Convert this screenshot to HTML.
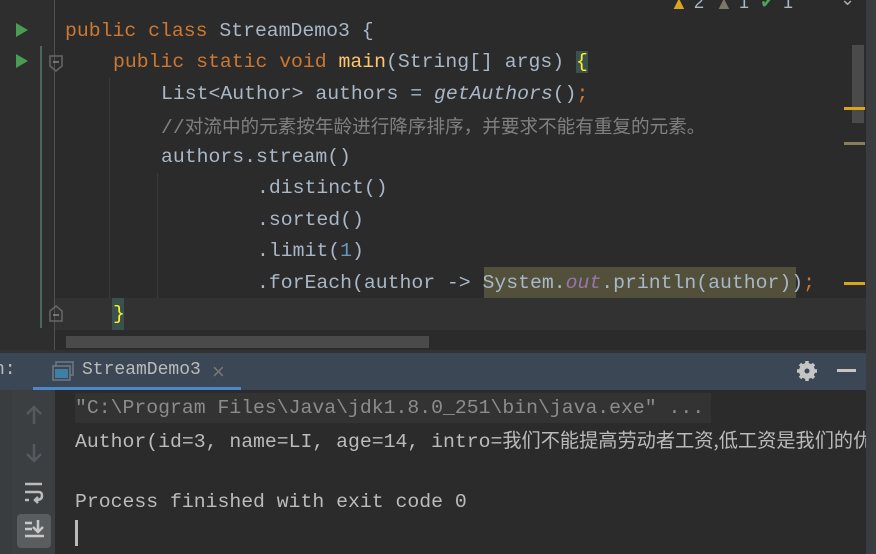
<!DOCTYPE html><html><head><meta charset="utf-8"><style>
*{margin:0;padding:0;box-sizing:border-box}
body{width:876px;height:554px;overflow:hidden;background:#2b2b2b;position:relative;font-family:"Liberation Mono","Noto Sans CJK SC",monospace;font-size:19.8px}
.a{position:absolute;white-space:pre;line-height:31px}
.k{color:#cc7832}.t{color:#a9b7c6}.f{color:#ffc66d}.i{font-style:italic}.c{color:#808080}.p{color:#9876aa;font-style:italic}
.cj{font-family:"Noto Sans CJK SC",sans-serif;font-size:18.6px}
</style></head><body>
<div style="position:absolute;left:0;top:0;width:55px;height:350px;background:#2e2e2e"></div>
<div style="position:absolute;left:54px;top:0;width:1px;height:350px;background:#505050"></div>
<div style="position:absolute;left:40px;top:46px;width:2px;height:282px;background:#4a6b5c"></div>
<div style="position:absolute;left:109px;top:78px;width:1px;height:220px;background:#3b3b3b"></div>
<div style="position:absolute;left:157px;top:173px;width:1px;height:125px;background:#3b3b3b"></div>
<div style="position:absolute;left:55px;top:298px;width:811px;height:32px;background:#323232"></div>
<div style="position:absolute;left:112px;top:298px;width:12px;height:32px;background:#3b514d"></div>
<div style="position:absolute;left:484px;top:267px;width:312px;height:31px;background:#52503a"></div>
<svg style="position:absolute;left:15px;top:22px" width="14" height="16"><path d="M1 1L13 8L1 15Z" fill="#499c54"/></svg>
<svg style="position:absolute;left:15px;top:53px" width="14" height="16"><path d="M1 1L13 8L1 15Z" fill="#499c54"/></svg>
<svg style="position:absolute;left:49px;top:55px" width="14" height="18"><path d="M1 1H13V11L7 16L1 11Z" fill="none" stroke="#666" stroke-width="1.5"/><path d="M4 7H10" stroke="#888" stroke-width="1.5"/></svg>
<svg style="position:absolute;left:49px;top:304px" width="14" height="18"><path d="M1 17H13V7L7 2L1 7Z" fill="none" stroke="#666" stroke-width="1.5"/><path d="M4 11H10" stroke="#888" stroke-width="1.5"/></svg>
<div class="a" style="left:65px;top:16px"><span class="k">public class </span><span class="t">StreamDemo3 {</span></div>
<div class="a" style="left:113px;top:47px"><span class="k">public static void </span><span class="f">main</span><span class="t">(String[] args) </span><span style="color:#ffef28;background:#3b514d">{</span></div>
<div class="a" style="left:161px;top:79px"><span class="t">List&lt;Author&gt; authors = </span><span class="t i">getAuthors</span><span class="t">()</span><span class="k">;</span></div>
<div class="a c" style="left:161px;top:110px">//<span class="cj">对流中的元素按年龄进行降序排序，并要求不能有重复的元素。</span></div>
<div class="a t" style="left:161px;top:142px">authors.stream()</div>
<div class="a t" style="left:257px;top:173px">.distinct()</div>
<div class="a t" style="left:257px;top:205px">.sorted()</div>
<div class="a t" style="left:257px;top:236px">.limit(<span style="color:#6897bb">1</span>)</div>
<div class="a t" style="left:257px;top:268px">.forEach(author -&gt; System.<span class="p">out</span>.println(author))<span class="k">;</span></div>
<div class="a" style="left:113px;top:299px;color:#ffef28">}</div>
<div style="position:absolute;left:670px;top:0;font-family:'Liberation Sans',sans-serif;font-size:18px;color:#a9b7c6;line-height:10px">
<span style="position:absolute;left:0;top:-2px;color:#d9a420">▲</span><span style="position:absolute;left:24px;top:-3px">2</span>
<span style="position:absolute;left:45px;top:-2px;color:#7d7766">▲</span><span style="position:absolute;left:69px;top:-3px">1</span>
<span style="position:absolute;left:90px;top:-3px;color:#4ca35a">✔</span><span style="position:absolute;left:113px;top:-3px">1</span>
<span style="position:absolute;left:140px;top:-3px;color:#aaa">⌃</span><span style="position:absolute;left:170px;top:-6px;color:#aaa">⌄</span></div>
<div style="position:absolute;left:852px;top:45px;width:12px;height:78px;background:#4a4a4a"></div>
<div style="position:absolute;left:844px;top:107px;width:21px;height:3px;background:#d9a420"></div>
<div style="position:absolute;left:844px;top:142px;width:21px;height:3px;background:#8a7d5c"></div>
<div style="position:absolute;left:844px;top:282px;width:21px;height:3px;background:#d9a420"></div>
<div style="position:absolute;left:66px;top:336px;width:363px;height:12px;background:#4a4a4a"></div>
<div style="position:absolute;left:0;top:350px;width:866px;height:3px;background:#323232"></div>
<div style="position:absolute;left:0;top:353px;width:866px;height:37px;background:#3b4754"></div>
<div class="a" style="left:-6px;top:355px;color:#bbb;font-size:18px">n:</div>
<svg style="position:absolute;left:52px;top:361px" width="22" height="20"><rect x="4" y="1" width="17" height="13" fill="none" stroke="#6e7a86" stroke-width="1.5"/><rect x="1" y="5" width="17" height="14" fill="#3b4754" stroke="#6e7a86" stroke-width="1.5"/><rect x="3" y="8" width="13" height="9" fill="#3e7fa6"/></svg>
<div class="a" style="left:82px;top:355px;color:#bbbbbb;font-size:18px">StreamDemo3</div>
<div class="a" style="left:212px;top:356px;color:#777;font-family:'Liberation Sans';font-size:22px">×</div>
<div style="position:absolute;left:33px;top:387px;width:208px;height:3px;background:#4a88c7"></div>
<svg style="position:absolute;left:796px;top:360px" width="22" height="22"><circle cx="11" cy="11" r="6" fill="none" stroke="#c5c5c5" stroke-width="4"/><path d="M11 1V21M1 11H21M4 4L18 18M18 4L4 18" stroke="#c5c5c5" stroke-width="3.5"/><circle cx="11" cy="11" r="2.5" fill="#3b4754"/></svg>
<div style="position:absolute;left:837px;top:369px;width:19px;height:3px;background:#c5c5c5"></div>
<div style="position:absolute;left:0;top:390px;width:12px;height:164px;background:#3a3d3f"></div>
<div style="position:absolute;left:12px;top:390px;width:43px;height:164px;background:#3c3f41"></div>
<svg style="position:absolute;left:24px;top:404px" width="20" height="110" stroke="#555a5e" stroke-width="2.5" fill="none"><path d="M10 20V3M3 10L10 3L17 10"/><path d="M10 40V57M3 50L10 57L17 50"/><g stroke="#bbb" stroke-width="2.5"><path d="M1 80H18M1 88H15Q18 88 18 92Q18 96 12 96M14 93L11 96L14 99M1 96H5"/></g></svg>
<div style="position:absolute;left:17px;top:514px;width:34px;height:34px;background:#5a5d5f;border-radius:4px"></div>
<svg style="position:absolute;left:24px;top:518px" width="22" height="24" stroke="#c8c8c8" stroke-width="2.5" fill="none"><path d="M1 5H8M1 11H8M1 18H20M14 2V14M9 9L14 14L19 9"/></svg>
<div style="position:absolute;left:75px;top:393px;width:636px;height:30px;background:#333"></div>
<div class="a" style="left:75px;top:393px;color:#8c8c8c">"C:\Program Files\Java\jdk1.8.0_251\bin\java.exe" ...</div>
<div class="a" style="left:75px;top:424px;color:#bbbbbb">Author(id=3, name=LI, age=14, intro=<span class="cj" style="font-size:19.2px">我们不能提高劳动者工资,低工资是我们的优</span></div>
<div class="a" style="left:75px;top:487px;color:#bbbbbb">Process finished with exit code 0</div>
<div style="position:absolute;left:75px;top:520px;width:3px;height:26px;background:#bbb"></div>
<div style="position:absolute;left:866px;top:0;width:10px;height:554px;background:#3a3d3f"></div>
</body></html>
